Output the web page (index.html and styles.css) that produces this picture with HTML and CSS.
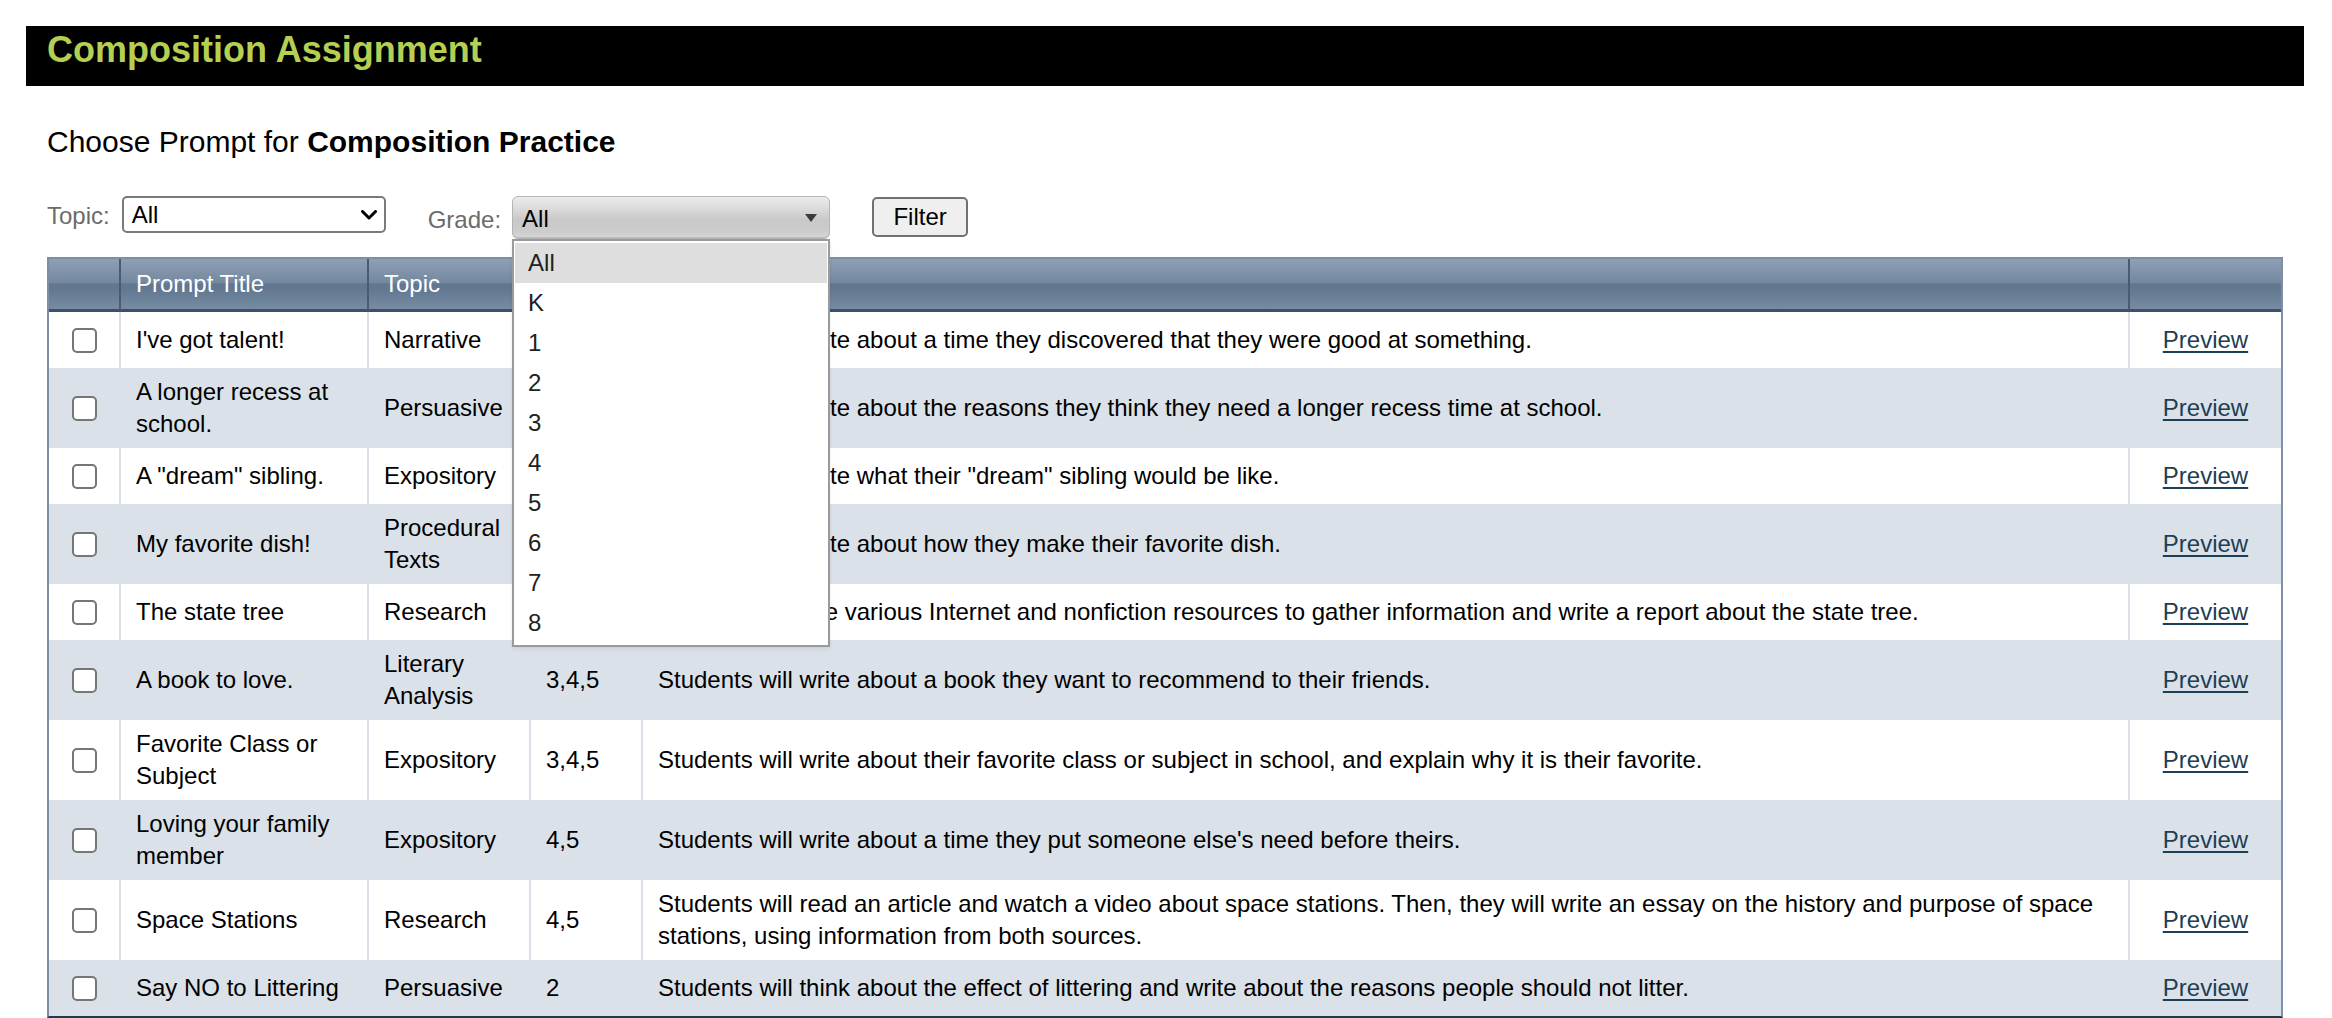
FILE: index.html
```html
<!DOCTYPE html>
<html lang="en">
<head>
<meta charset="utf-8">
<title>Composition Assignment</title>
<link rel="stylesheet" href="styles.css">
</head>
<body>
<div class="page">
  <div class="banner">Composition Assignment</div>
  <div class="main">
    <h2 class="subtitle">Choose Prompt for <b>Composition Practice</b></h2>
    <div class="filters">
      <span class="label label-topic">Topic:</span>
      <div class="select select-topic">
        <span class="select-value">All</span>
        <svg class="chevron" width="16" height="10" viewBox="0 0 16 10"><polyline points="1.5,1.5 8,8 14.5,1.5" fill="none" stroke="#000" stroke-width="3" stroke-linecap="round" stroke-linejoin="round"/></svg>
      </div>
      <span class="label label-grade">Grade:</span>
      <div class="dd">
        <div class="select select-grade">
          <span class="select-value">All</span>
          <svg class="tri" width="12" height="8" viewBox="0 0 12 8"><polygon points="0,0 12,0 6,8" fill="#3a3a3a"/></svg>
        </div>
        <ul class="dd-list">
          <li class="dd-item active">All</li>
          <li class="dd-item">K</li>
          <li class="dd-item">1</li>
          <li class="dd-item">2</li>
          <li class="dd-item">3</li>
          <li class="dd-item">4</li>
          <li class="dd-item">5</li>
          <li class="dd-item">6</li>
          <li class="dd-item">7</li>
          <li class="dd-item">8</li>
        </ul>
      </div>
      <button class="btn" type="button">Filter</button>
    </div>

    <table class="prompts">
      <colgroup>
        <col class="c-check">
        <col class="c-title">
        <col class="c-topic">
        <col class="c-grade">
        <col class="c-desc">
        <col class="c-prev">
      </colgroup>
      <thead>
        <tr>
          <th></th>
          <th>Prompt Title</th>
          <th>Topic</th>
          <th>Grade</th>
          <th>Description</th>
          <th></th>
        </tr>
      </thead>
      <tbody>
        <tr>
          <td class="chk"><input type="checkbox"></td>
          <td>I've got talent!</td>
          <td>Narrative</td>
          <td>2,3</td>
          <td>Students will write about a time they discovered that they were good at something.</td>
          <td class="prev"><a href="#">Preview</a></td>
        </tr>
        <tr>
          <td class="chk"><input type="checkbox"></td>
          <td>A longer recess at school.</td>
          <td>Persuasive</td>
          <td>3,4</td>
          <td>Students will write about the reasons they think they need a longer recess time at school.</td>
          <td class="prev"><a href="#">Preview</a></td>
        </tr>
        <tr>
          <td class="chk"><input type="checkbox"></td>
          <td>A "dream" sibling.</td>
          <td>Expository</td>
          <td>2,3</td>
          <td>Students will write what their "dream" sibling would be like.</td>
          <td class="prev"><a href="#">Preview</a></td>
        </tr>
        <tr>
          <td class="chk"><input type="checkbox"></td>
          <td>My favorite dish!</td>
          <td>Procedural Texts</td>
          <td>3,4,5</td>
          <td>Students will write about how they make their favorite dish.</td>
          <td class="prev"><a href="#">Preview</a></td>
        </tr>
        <tr>
          <td class="chk"><input type="checkbox"></td>
          <td>The state tree</td>
          <td>Research</td>
          <td>4,5</td>
          <td>Students will use various Internet and nonfiction resources to gather information and write a report about the state tree.</td>
          <td class="prev"><a href="#">Preview</a></td>
        </tr>
        <tr>
          <td class="chk"><input type="checkbox"></td>
          <td>A book to love.</td>
          <td>Literary Analysis</td>
          <td>3,4,5</td>
          <td>Students will write about a book they want to recommend to their friends.</td>
          <td class="prev"><a href="#">Preview</a></td>
        </tr>
        <tr>
          <td class="chk"><input type="checkbox"></td>
          <td>Favorite Class or Subject</td>
          <td>Expository</td>
          <td>3,4,5</td>
          <td>Students will write about their favorite class or subject in school, and explain why it is their favorite.</td>
          <td class="prev"><a href="#">Preview</a></td>
        </tr>
        <tr>
          <td class="chk"><input type="checkbox"></td>
          <td>Loving your family member</td>
          <td>Expository</td>
          <td>4,5</td>
          <td>Students will write about a time they put someone else's need before theirs.</td>
          <td class="prev"><a href="#">Preview</a></td>
        </tr>
        <tr>
          <td class="chk"><input type="checkbox"></td>
          <td>Space Stations</td>
          <td>Research</td>
          <td>4,5</td>
          <td>Students will read an article and watch a video about space stations. Then, they will write an essay on the history and purpose of space stations, using information from both sources.</td>
          <td class="prev"><a href="#">Preview</a></td>
        </tr>
        <tr>
          <td class="chk"><input type="checkbox"></td>
          <td>Say NO to Littering</td>
          <td>Persuasive</td>
          <td>2</td>
          <td>Students will think about the effect of littering and write about the reasons people should not litter.</td>
          <td class="prev"><a href="#">Preview</a></td>
        </tr>
      </tbody>
    </table>
  </div>
</div>
</body>
</html>
```

FILE: styles.css
```css
html, body {
  margin: 0;
  padding: 0;
  background: #ffffff;
}

body {
  font-family: "Liberation Sans", Arial, Helvetica, sans-serif;
  color: #000;
  font-size: 24px;
}

.page {
  padding: 26px 28px 0 26px;
}

.banner {
  box-sizing: border-box;
  height: 60px;
  background: #000;
  color: #b5cf52;
  font-weight: bold;
  font-size: 36px;
  line-height: 40px;
  padding: 4px 21px 0;
}

.main {
  padding-left: 21px;
}

.subtitle {
  margin: 39px 0 0;
  font-size: 30px;
  line-height: 34px;
  font-weight: normal;
}

.subtitle b {
  font-weight: bold;
}

.filters {
  display: flex;
  align-items: flex-start;
  margin-top: 37px;
  height: 43px;
}

.label {
  color: #6b6b6b;
  font-size: 24px;
  line-height: 28px;
}

.label-topic {
  margin-top: 6px;
  margin-right: 12px;
}

.label-grade {
  margin-top: 10px;
  margin-left: 42px;
  margin-right: 11px;
}

.select {
  box-sizing: border-box;
  display: flex;
  align-items: center;
  justify-content: space-between;
  font-size: 24px;
}

.select-topic {
  width: 264px;
  height: 37px;
  border: 2px solid #7a7a7a;
  border-radius: 5px;
  padding: 0 7px 0 8px;
  line-height: 33px;
  background: #fff;
}

.chevron {
  display: block;
}

.dd {
  position: relative;
}

.select-grade {
  width: 318px;
  height: 43px;
  border: 1px solid #b4b4b4;
  border-radius: 6px;
  padding: 3px 12px 0 9px;
  line-height: 32px;
  background: linear-gradient(#ececec 0%, #dadada 30%, #c9c9c9 55%, #cbcbcb 80%, #d6d6d6 100%);
  box-shadow: inset 0 -1px 0 #bdbdbd;
}

.tri {
  display: block;
  margin-top: -3px;
}

.dd-list {
  position: absolute;
  top: 43px;
  left: 0;
  z-index: 5;
  box-sizing: border-box;
  width: 318px;
  margin: 0;
  padding: 2px 1px;
  list-style: none;
  background: #fff;
  border: 2px solid #9a9a9a;
  box-shadow: 0 2px 4px rgba(0, 0, 0, 0.08);
}

.dd-item {
  height: 40px;
  line-height: 40px;
  padding-left: 13px;
  color: #222;
  font-size: 24px;
}

.dd-item.active {
  background: #dedede;
}

.btn {
  box-sizing: border-box;
  width: 96px;
  height: 40px;
  margin: 1px 0 0 42px;
  padding: 0;
  border: 2px solid #717171;
  border-radius: 5px;
  background: #efefef;
  font-family: inherit;
  font-size: 24px;
  line-height: 36px;
  color: #000;
}

/* table */
.prompts {
  margin-top: 18px;
  width: 2236px;
  table-layout: fixed;
  border-collapse: separate;
  border-spacing: 0;
  border: 2px solid #7d8ea5;
  border-bottom-color: #27374a;
}

.c-check { width: 72px; }
.c-title { width: 248px; }
.c-topic { width: 162px; }
.c-grade { width: 112px; }
.c-desc { width: 1487px; }
.c-prev { width: 151px; }

.prompts thead tr {
  height: 53px;
}

.prompts th {
  padding: 0 15px;
  text-align: left;
  font-weight: normal;
  font-size: 24px;
  line-height: 32px;
  color: #fff;
  vertical-align: middle;
  background: linear-gradient(#8fa0b5 0%, #8193a9 25%, #7488a0 47%, #60778f 50%, #647a93 65%, #6f859c 85%, #778ca2 100%);
  border-right: 2px solid #4a5c71;
  border-bottom: 3px solid #3e5065;
}

.prompts th:last-child {
  border-right: 0;
}

.prompts tbody tr {
  height: 56px;
}

.prompts td {
  padding: 8px 15px;
  font-size: 24px;
  line-height: 32px;
  vertical-align: middle;
  border-right: 2px solid #dae1e8;
  overflow: hidden;
}

.prompts td:last-child {
  border-right: 0;
}

.prompts tbody tr:nth-child(even) td {
  background: #dae1e8;
}

.prompts td.chk {
  padding: 0;
  text-align: center;
}

.chk input {
  -webkit-appearance: none;
  appearance: none;
  display: block;
  box-sizing: border-box;
  width: 25px;
  height: 25px;
  margin: 0 auto;
  border: 2px solid #767676;
  border-radius: 5px;
  background: #fff;
}

.prompts td.prev {
  text-align: center;
  padding: 8px 0;
}

.prev a {
  color: #1c3f55;
  text-decoration: underline;
  text-decoration-thickness: 2px;
  text-underline-offset: 3px;
}
```
